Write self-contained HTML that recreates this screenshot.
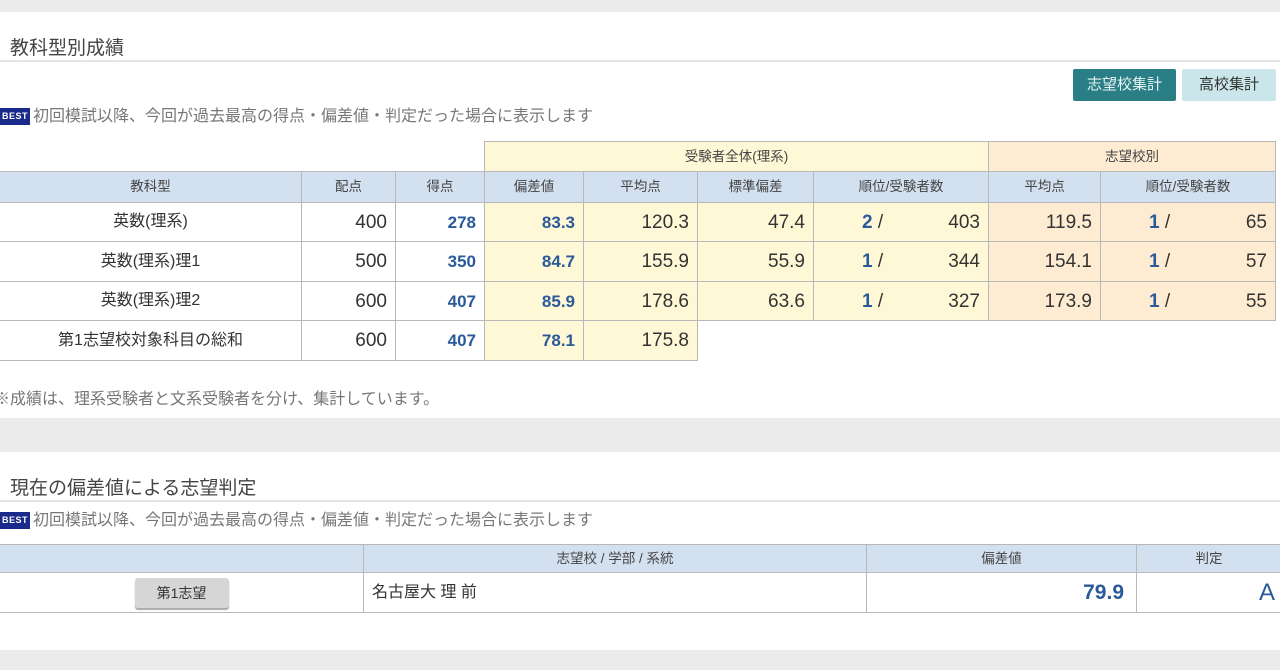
<!DOCTYPE html>
<html><head><meta charset="utf-8"><style>
*{margin:0;padding:0;box-sizing:border-box}
body{width:1280px;height:670px;background:#ececec;font-family:"Liberation Sans","Noto Sans CJK JP",sans-serif;color:#333;position:relative;overflow:hidden}
.card{position:absolute;left:0;width:1280px;background:#fff}
.h{position:absolute;left:10px;font-size:19px;color:#444}
.line{position:absolute;left:0;width:1280px;height:2px;background:#e4e4e4}
.best{position:absolute;left:0;font-size:16px;color:#777;white-space:nowrap;line-height:20px}
.best b{display:inline-block;background:#1a2a8a;color:#fff;font-size:9px;padding:3px 2px;margin-right:3px;letter-spacing:.5px;vertical-align:2px;line-height:11px}
table{position:absolute;border-collapse:collapse;table-layout:fixed}
td{border:1px solid #b8b8b8;font-size:19px;text-align:right;padding:0 8px;line-height:1}
.hd td{background:#d3e0ef;font-size:13.5px;text-align:center;color:#444;padding:0}
.gh td{font-size:13.5px;text-align:center;color:#444}
.y{background:#fef8d6}.o{background:#fdebd2}
.bl{color:#2a5a9a;font-weight:bold;font-size:17px}
.c{text-align:center;font-size:16px}
.n{border:none;background:none}
.rk{display:flex;justify-content:space-between;padding-left:40px}
.rk span:first-child b{color:#2a5a9a}
</style></head><body>
<div class="card" style="top:12px;height:406px">
<div class="h" style="top:21px">教科型別成績</div>
<div class="line" style="top:48px"></div>
<div style="position:absolute;left:1073px;top:57px;width:103px;height:32px;background:#2a7f87;color:#e8f4f4;font-size:15px;text-align:center;line-height:32px;border-radius:2px">志望校集計</div>
<div style="position:absolute;left:1182px;top:57px;width:94px;height:32px;background:#cbe6ea;color:#333;font-size:15px;text-align:center;line-height:32px;border-radius:2px">高校集計</div>
<div class="best" style="top:95px"><b>BEST</b>初回模試以降、今回が過去最高の得点・偏差値・判定だった場合に表示します</div>
<div class="best" style="top:378px;left:-6px">※成績は、理系受験者と文系受験者を分け、集計しています。</div>
</div>
<table style="left:-1px;top:141px;width:1276px">
<colgroup><col style="width:302px"><col style="width:94px"><col style="width:89px"><col style="width:99px"><col style="width:114px"><col style="width:116px"><col style="width:175px"><col style="width:112px"><col style="width:175px"></colgroup>
<tr class="gh" style="height:30px"><td class="n"></td><td class="n"></td><td class="n"></td><td colspan="4" class="y">受験者全体(理系)</td><td colspan="2" class="o">志望校別</td></tr>
<tr class="hd" style="height:31px"><td>教科型</td><td>配点</td><td>得点</td><td>偏差値</td><td>平均点</td><td>標準偏差</td><td>順位/受験者数</td><td>平均点</td><td>順位/受験者数</td></tr>
<tr style="height:39px"><td class="c">英数(理系)</td><td>400</td><td class="bl">278</td><td class="y bl">83.3</td><td class="y">120.3</td><td class="y">47.4</td><td class="y"><div class="rk"><span><b>2</b> /</span><span>403</span></div></td><td class="o">119.5</td><td class="o"><div class="rk"><span><b>1</b> /</span><span>65</span></div></td></tr>
<tr style="height:40px"><td class="c">英数(理系)理1</td><td>500</td><td class="bl">350</td><td class="y bl">84.7</td><td class="y">155.9</td><td class="y">55.9</td><td class="y"><div class="rk"><span><b>1</b> /</span><span>344</span></div></td><td class="o">154.1</td><td class="o"><div class="rk"><span><b>1</b> /</span><span>57</span></div></td></tr>
<tr style="height:39px"><td class="c">英数(理系)理2</td><td>600</td><td class="bl">407</td><td class="y bl">85.9</td><td class="y">178.6</td><td class="y">63.6</td><td class="y"><div class="rk"><span><b>1</b> /</span><span>327</span></div></td><td class="o">173.9</td><td class="o"><div class="rk"><span><b>1</b> /</span><span>55</span></div></td></tr>
<tr style="height:40px"><td class="c">第1志望校対象科目の総和</td><td>600</td><td class="bl">407</td><td class="y bl">78.1</td><td class="y">175.8</td><td class="n"></td><td class="n"></td><td class="n"></td><td class="n"></td></tr>
</table>
<div class="card" style="top:452px;height:198px">
<div class="h" style="top:21px">現在の偏差値による志望判定</div>
<div class="line" style="top:48px"></div>
<div class="best" style="top:59px"><b>BEST</b>初回模試以降、今回が過去最高の得点・偏差値・判定だった場合に表示します</div>
</div>
<table style="left:-1px;top:544px;width:1282px">
<colgroup><col style="width:364px"><col style="width:503px"><col style="width:270px"><col style="width:145px"></colgroup>
<tr class="hd" style="height:28px"><td></td><td>志望校 / 学部 / 系統</td><td>偏差値</td><td>判定</td></tr>
<tr style="height:40px"><td style="text-align:center"><span style="display:inline-block;width:94px;height:30px;line-height:30px;background:#d6d6d6;border-radius:3px;box-shadow:0 2px 1px #aaa;font-size:14px;color:#333">第1志望</span></td><td style="text-align:left;font-size:16px">名古屋大 理 前</td><td class="bl" style="font-size:21px;padding-right:12px">79.9</td><td style="color:#2a5a9a;font-size:24px;padding-right:6px">A</td></tr>
</table>
</body></html>
